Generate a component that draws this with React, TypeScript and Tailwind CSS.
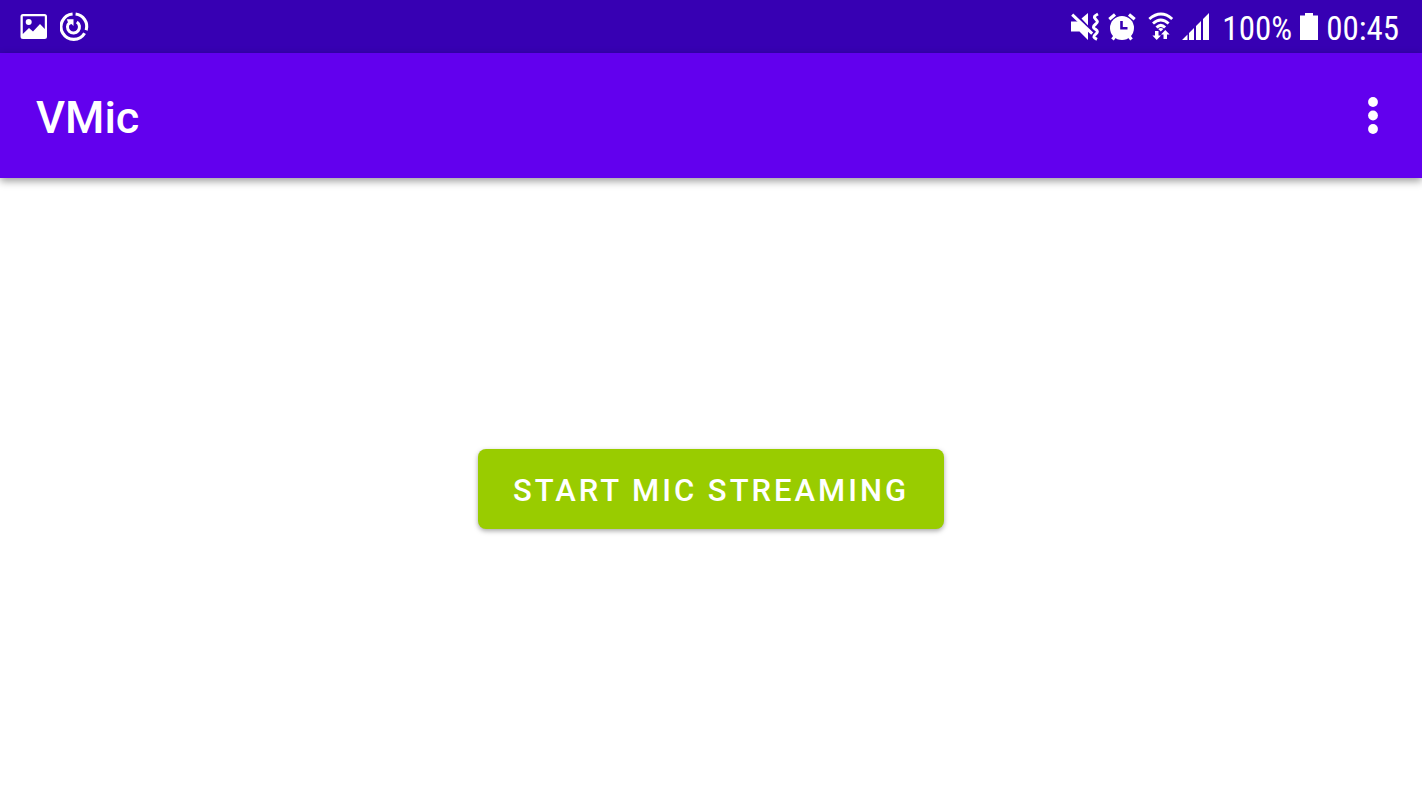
function ImageIcon() {
  return (
    <svg viewBox="0 0 28 28" className="size-7" aria-hidden>
      <path
        fill="#fff"
        fillRule="evenodd"
        d="M3 1h21.500a2.500 2.500 0 0 1 2.500 2.500v20a2.500 2.500 0 0 1-2.500 2.500H3a2.500 2.500 0 0 1-2.500-2.500v-20A2.500 2.500 0 0 1 3 1Zm-.2 2.200v17.800l6.200-6 4 3.500 7-7.500 4.800 5V3.200Z"
      />
      <circle cx="8.700" cy="9" r="3" fill="#fff" />
    </svg>
  );
}

function RestartIcon() {
  return (
    <svg viewBox="0 0 30 30" className="size-[30px]" fill="none" stroke="#fff" aria-hidden>
      <path strokeWidth="3.100" d="M12.600 2A12.700 12.700 0 1 0 24.600 21.200" />
      <path strokeWidth="3.100" d="M15.600 2A12.700 12.700 0 0 1 26.200 18.200" />
      <path strokeWidth="3" d="M9.500 10.500A6 6 0 1 0 16.800 10" />
      <path fill="#fff" stroke="none" d="M6.800 7.300h6.700v6.700l-2-2-2.500 1Z" />
    </svg>
  );
}

function MuteVibrateIcon() {
  return (
    <svg viewBox="0 0 30 30" className="size-[30px]" fill="#fff" aria-hidden>
      <path d="M1 9.500h7.500L18 19V28l-8.500-8.500H1Z" />
      <path d="M11.500 6.500 18 1v12.500Z" />
      <path fill="none" stroke="#fff" strokeWidth="3" d="m2.200 2.700 20 19" />
      <path
        fill="none"
        stroke="#fff"
        strokeWidth="3"
        d="M28 2c-4 2-4.500 3-2.500 5s3 3 0 5.300-2.500 3.300 0 5 2.500 3 0 5-2.500 3.200 1.500 5"
      />
    </svg>
  );
}

function AlarmIcon() {
  return (
    <svg viewBox="0 0 28 28" className="size-7" aria-hidden>
      <circle cx="14" cy="15" r="12" fill="#fff" />
      <path fill="none" stroke="#fff" strokeWidth="3.200" d="M1.300 6.200 7 1.500M26.700 6.200 21 1.500M7.500 22.500l-3 4M20.500 22.500l3 4" />
      <path fill="none" stroke="#3700b3" strokeWidth="2.600" d="M13.500 8v7.200h6" />
    </svg>
  );
}

function WifiIcon() {
  return (
    <svg viewBox="0 0 26 30" className="h-[30px] w-[26px]" aria-hidden>
      <g fill="none" stroke="#fff" strokeWidth="2.900">
        <path d="M1.300 7Q13-2.800 24.200 7" />
        <path d="M5 11.500q7.800-6.800 15.600 0" />
        <path d="M8.500 15.500q4.300-4.200 8.600 0" />
      </g>
      <path fill="#fff" d="m12.800 19.500-2.600-2.500q2.600-2 5.200 0Z" />
      <path fill="#fff" d="M7 19h3.500v4.500h2.500L8.700 28l-4.300-4.500H7ZM15.500 27v-4.500H13l4.300-4.500 4.300 4.500H19V27Z" />
    </svg>
  );
}

function SignalIcon() {
  return (
    <svg viewBox="0 0 28 28" className="size-7" fill="#fff" aria-hidden>
      <path d="M0 27 5.500 21.500V27ZM7 20l5-5v12H7ZM14 13l5-5v19H14ZM21 6l6-6V27H21Z" />
    </svg>
  );
}

function BatteryIcon() {
  return (
    <svg viewBox="0 0 18 28" className="h-7 w-[18px]" fill="#fff" aria-hidden>
      <path d="M5 0h8v2.500h5V27H0V2.500h5Z" />
    </svg>
  );
}

function StatusBar() {
  return (
    <div className="flex h-[53px] items-center justify-between bg-[#3700b3] pr-[23px] pl-5 text-white">
      <div className="flex items-center gap-3">
        <ImageIcon />
        <RestartIcon />
      </div>
      <div className="flex items-center gap-2 font-['Roboto_Condensed','Roboto',sans-serif] text-[33px] leading-none">
        <MuteVibrateIcon />
        <AlarmIcon />
        <span className="ml-1 flex items-center gap-2">
          <WifiIcon />
          <SignalIcon />
        </span>
        <span className="ml-1 pt-1">100%</span>
        <BatteryIcon />
        <time className="pt-1">00:45</time>
      </div>
    </div>
  );
}

function AppBar() {
  return (
    <header className="relative flex h-[125px] items-center justify-between bg-[#6200ee] pr-6 pl-9 text-white shadow-[0_3px_8px_rgba(0,0,0,0.4)]">
      <h1 className="pt-1 text-[45px] leading-none font-medium">VMic</h1>
      <button type="button" aria-label="More options" className="flex h-12 w-[50px] items-center justify-center">
        <svg viewBox="0 0 10 38" className="h-[38px] w-[10px]" fill="#fff" aria-hidden>
          <circle cx="5" cy="5" r="4.900" />
          <circle cx="5" cy="18.500" r="4.900" />
          <circle cx="5" cy="32" r="4.900" />
        </svg>
      </button>
    </header>
  );
}

export default function App() {
  return (
    <div className="flex min-h-screen flex-col bg-white font-['Roboto',sans-serif]">
      <StatusBar />
      <AppBar />
      <main className="flex flex-1 items-center justify-center">
        <button
          type="button"
          className="h-20 rounded-lg bg-[#99cc00] px-[35px] pt-0.5 text-[31px] leading-none font-medium tracking-[3px] text-white shadow-[0_2px_5px_rgba(0,0,0,0.35)]"
        >
          START MIC STREAMING
        </button>
      </main>
    </div>
  );
}
